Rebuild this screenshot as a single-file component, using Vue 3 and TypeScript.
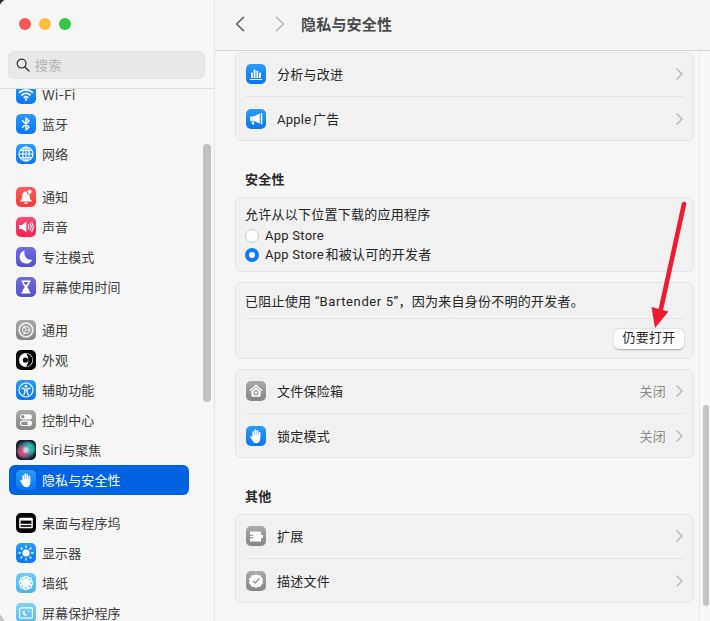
<script setup lang="ts">
interface NavItem { label: string; icon: string; tone: string; active?: boolean }
interface Row { label: string; icon: string; tone: string; value?: string }

const hand = `<path d="M7.2 10V6.2M9.3 9.4V4.2M11.4 9.4V4.8M13.5 10.4V6.6" stroke="#fff" stroke-width="1.7" stroke-linecap="round" fill="none"/><path d="M6.4 9.2H14.3V12.4C14.3 15.4 12.6 17.2 10.3 17.2C8.4 17.2 7.4 16.4 6.4 14.6L4.4 11.4C3.9 10.4 5 9.6 5.8 10.4L6.4 11Z" fill="#fff"/>`

const icons: Record<string, string> = {
  wifi: `<g fill="none" stroke="#fff" stroke-width="1.7" stroke-linecap="round"><path d="M3.6 8.4C7.2 5 12.8 5 16.4 8.4"/><path d="M6 11C8.3 8.9 11.7 8.9 14 11"/><path d="M8.2 13.3C9.3 12.4 10.7 12.4 11.8 13.3"/></g><circle cx="10" cy="15.4" r="1.2" fill="#fff"/>`,
  bluetooth: `<path d="M6.6 6.8L13 12.9L10 16V4L13 7.1L6.6 13.2" fill="none" stroke="#fff" stroke-width="1.4" stroke-linejoin="round" stroke-linecap="round"/>`,
  globe: `<g fill="none" stroke="#fff" stroke-width="1.1"><circle cx="10" cy="10" r="7"/><ellipse cx="10" cy="10" rx="3.2" ry="7"/><path d="M10 3V17M3 10H17M4 6.4H16M4 13.6H16"/></g>`,
  bell: `<path d="M10 4.6C7.4 4.6 6.2 6.6 6.2 9V11.4L4.4 13.6V14.6H15.6V13.6L13.8 11.4V9C13.8 6.6 12.6 4.6 10 4.6Z" fill="#fff"/><path d="M8.2 15.4H11.8C11.6 16.6 10.9 17 10 17S8.4 16.6 8.2 15.4Z" fill="#fff"/><circle cx="13.6" cy="4.8" r="2.6" fill="#fff" stroke="#fb4a4a" stroke-width="1"/>`,
  sound: `<path d="M3 8H6L10.4 4.8V15.2L6 12H3Z" fill="#fff"/><g fill="none" stroke="#fff" stroke-width="1.1" stroke-linecap="round"><path d="M12.2 8C13 9.2 13 10.8 12.2 12"/><path d="M14 6.6C15.3 8.6 15.3 11.4 14 13.4"/><path d="M15.8 5.4C17.5 8.2 17.5 11.8 15.8 14.6"/></g>`,
  moon: `<path d="M8.6 3.6C5.6 4.4 3.6 7 3.6 10.1C3.6 13.8 6.6 16.6 10.2 16.6C13 16.6 15.4 14.9 16.4 12.4C12 13.6 7.2 10 8.6 3.6Z" fill="#fff"/>`,
  hourglass: `<path d="M5.6 3.6H14.4V5H13.6C13.6 7.6 11.8 9 11 10C11.8 11 13.6 12.4 13.6 15H14.4V16.4H5.6V15H6.4C6.4 12.4 8.2 11 9 10C8.2 9 6.4 7.6 6.4 5H5.6ZM7.8 5C7.9 6 8.5 7 10 8.4C11.5 7 12.1 6 12.2 5Z" fill="#fff"/><path d="M7.6 15H12.4C12 13.4 11 12.6 10 11.8C9 12.6 8 13.4 7.6 15Z" fill="#fff"/>`,
  gear: `<g fill="none" stroke="#ececec"><circle cx="10" cy="10" r="6.8" stroke-width="1.8"/><circle cx="10" cy="10" r="3.4" stroke-width="1.1"/><path d="M7.6 5.4L10 10M15 10H10M7.6 14.6L10 10" stroke-width="1.1"/></g>`,
  appearance: `<circle cx="10" cy="10" r="7" fill="#fff"/><path d="M10 3.6A6.4 6.4 0 0 1 10 16.4C13 14 13 6 10 3.6Z" fill="#000"/><circle cx="9.4" cy="10" r="2.6" fill="#000"/>`,
  access: `<circle cx="10" cy="10" r="7" fill="none" stroke="#fff" stroke-width="1.2"/><circle cx="10" cy="6.3" r="1.3" fill="#fff"/><path d="M6 8.2L9 9V11.4L7.8 15M14 8.2L11 9V11.4L12.2 15" fill="none" stroke="#fff" stroke-width="1.3" stroke-linecap="round"/>`,
  toggles: `<rect x="4" y="4.2" width="12" height="5.2" rx="2.6" fill="#fff"/><circle cx="6.8" cy="6.8" r="1.7" fill="#8e8e8e"/><rect x="4.5" y="11.1" width="11" height="4.4" rx="2.2" fill="none" stroke="#fff" stroke-width="1.1"/><circle cx="13.2" cy="13.3" r="1.7" fill="#fff"/>`,
  siri: ``,
  hand,
  dock: `<rect x="3.2" y="4.8" width="13.6" height="10.4" rx="1.2" fill="#fff"/><rect x="4.6" y="7.6" width="10.8" height="3.2" fill="#000"/><rect x="4.6" y="12.2" width="10.8" height="1.6" fill="#000"/>`,
  sun: `<circle cx="10" cy="10" r="3.6" fill="#fff"/><g stroke="#fff" stroke-width="1.3" stroke-linecap="round"><path d="M10 3V4.4M10 15.6V17M3 10H4.4M15.6 10H17M5 5L6 6M14 14L15 15M5 15L6 14M14 6L15 5"/></g>`,
  flower: `<g fill="none" stroke="#fff" stroke-width="1.2"><circle cx="10" cy="5.8" r="2.4"/><circle cx="10" cy="14.2" r="2.4"/><circle cx="5.8" cy="10" r="2.4"/><circle cx="14.2" cy="10" r="2.4"/><circle cx="7" cy="7" r="2.4"/><circle cx="13" cy="7" r="2.4"/><circle cx="7" cy="13" r="2.4"/><circle cx="13" cy="13" r="2.4"/></g><circle cx="10" cy="10" r="1.8" fill="#fff"/>`,
  saver: `<rect x="3.6" y="4.8" width="12.8" height="10.4" rx="1.2" fill="none" stroke="#fff" stroke-width="1.2"/><path d="M8.4 7.2C6.8 8 6.4 9.8 7.2 11.2C8 12.6 10 13 11.4 12C9.6 12 8 10 8.4 7.2Z" fill="#fff"/><circle cx="12.6" cy="8" r=".8" fill="#fff"/>`,
  bars: `<g fill="#fff"><rect x="5" y="8.6" width="1.8" height="5.4"/><rect x="7.7" y="5.6" width="1.8" height="8.4"/><rect x="10.4" y="6.8" width="1.8" height="7.2"/><rect x="13.1" y="8.6" width="1.8" height="5.4"/><rect x="3.6" y="15" width="12.8" height="1"/></g>`,
  megaphone: `<path d="M4 7.6H7.4L13.8 4.6V14.6L7.4 11.8H4Z" fill="#fff"/><rect x="14.8" y="4" width="1.5" height="11.4" rx=".7" fill="#fff"/><path d="M5.4 12.4H7.6L8.4 15.6H6.4Z" fill="#fff"/>`,
  house: `<path d="M10 3.6L3.2 9.4L4 10.2L10 5.2L16 10.2L16.8 9.4Z" fill="#fff"/><path d="M5.4 10V15.8H14.6V10L10 6.2Z" fill="#fff"/><circle cx="10" cy="11.6" r="2" fill="none" stroke="#8f8f8f" stroke-width="1.1"/>`,
  puzzle: `<path d="M4 5.4H15V9H17V12H15V15.6H4V12.2H7.4V8.8H4Z" fill="#fff"/><path d="M4 10.5H8.4" stroke="#fff" stroke-width="1"/><circle cx="8.2" cy="10.5" r="1.1" fill="#fff"/>`,
  badge: `<path d="M10 3L12 4.3L14.4 4.2L15.5 6.4L17.2 8L16.4 10L17.2 12L15.5 13.6L14.4 15.8L12 15.7L10 17L8 15.7L5.6 15.8L4.5 13.6L2.8 12L3.6 10L2.8 8L4.5 6.4L5.6 4.2L8 4.3Z" fill="#fff"/><path d="M7.2 10.2L9.2 12.2L13 7.8" fill="none" stroke="#8a8a8a" stroke-width="1.2" stroke-linecap="round" stroke-linejoin="round"/>`
}

const navGroups: NavItem[][] = [
  [
    { label: 'Wi-Fi', icon: 'wifi', tone: 'blue' },
    { label: '蓝牙', icon: 'bluetooth', tone: 'blue' },
    { label: '网络', icon: 'globe', tone: 'blue' }
  ],
  [
    { label: '通知', icon: 'bell', tone: 'red' },
    { label: '声音', icon: 'sound', tone: 'pink' },
    { label: '专注模式', icon: 'moon', tone: 'indigo' },
    { label: '屏幕使用时间', icon: 'hourglass', tone: 'indigo' }
  ],
  [
    { label: '通用', icon: 'gear', tone: 'gray' },
    { label: '外观', icon: 'appearance', tone: 'black' },
    { label: '辅助功能', icon: 'access', tone: 'blue' },
    { label: '控制中心', icon: 'toggles', tone: 'gray' },
    { label: 'Siri与聚焦', icon: 'siri', tone: 'siri' },
    { label: '隐私与安全性', icon: 'hand', tone: 'blue', active: true }
  ],
  [
    { label: '桌面与程序坞', icon: 'dock', tone: 'black' },
    { label: '显示器', icon: 'sun', tone: 'blue' },
    { label: '墙纸', icon: 'flower', tone: 'sky' },
    { label: '屏幕保护程序', icon: 'saver', tone: 'cyan' }
  ]
]

const privacyRows: Row[] = [
  { label: '分析与改进', icon: 'bars', tone: 'blue' },
  { label: 'Apple广告', icon: 'megaphone', tone: 'blue' }
]
const vaultRows: Row[] = [
  { label: '文件保险箱', icon: 'house', tone: 'gray', value: '关闭' },
  { label: '锁定模式', icon: 'hand', tone: 'blue', value: '关闭' }
]
const otherRows: Row[] = [
  { label: '扩展', icon: 'puzzle', tone: 'gray' },
  { label: '描述文件', icon: 'badge', tone: 'gray' }
]
const rowCards: { heading?: string; rows: Row[] }[] = [{ rows: vaultRows }, { heading: '其他', rows: otherRows }]
</script>

<template>
  <div class="window">
    <aside class="sidebar">
      <div class="lights">
        <span class="light red-light"></span>
        <span class="light yellow-light"></span>
        <span class="light green-light"></span>
      </div>
      <div class="search">
        <svg class="search-icon" viewBox="0 0 14 14" width="14" height="14">
          <circle cx="5.6" cy="5.6" r="4.4" fill="none" stroke="#333" stroke-width="1.2" />
          <path d="M8.9 8.9L13 13" stroke="#333" stroke-width="1.4" stroke-linecap="round" />
        </svg>
        <span class="lift">搜索</span>
      </div>
      <nav class="nav">
        <div class="nav-inner">
          <div v-for="(group, g) in navGroups" :key="g" class="nav-group">
            <div v-for="item in group" :key="item.label" class="nav-item" :class="{ active: item.active }">
              <span class="icon" :class="item.tone">
                <svg viewBox="0 0 20 20" width="20" height="20" v-html="icons[item.icon]"></svg>
              </span>
              <span class="lift">{{ item.label }}</span>
            </div>
          </div>
        </div>
        <div class="side-thumb"></div>
      </nav>
    </aside>

    <main class="main">
      <header class="toolbar">
        <svg class="nav-arrow" viewBox="0 0 10 16" width="10" height="16">
          <path d="M8.6 1.2L1.6 8L8.6 14.8" fill="none" stroke="#5a5a5a" stroke-width="1.5" stroke-linecap="round" stroke-linejoin="round" />
        </svg>
        <svg class="nav-arrow forward" viewBox="0 0 10 16" width="10" height="16">
          <path d="M1.4 1.2L8.4 8L1.4 14.8" fill="none" stroke="#b4b4b4" stroke-width="1.5" stroke-linecap="round" stroke-linejoin="round" />
        </svg>
        <h1 class="lift">隐私与安全性</h1>
      </header>

      <div class="body">
        <div class="content">
          <section class="card">
            <div v-for="row in privacyRows" :key="row.label" class="row">
              <span class="icon" :class="row.tone">
                <svg viewBox="0 0 20 20" width="20" height="20" v-html="icons[row.icon]"></svg>
              </span>
              <span class="row-label lift">{{ row.label }}</span>
              <svg class="chev" viewBox="0 0 7 12" width="7" height="12"><path d="M1 1L6 6L1 11" fill="none" stroke="#b5b5b5" stroke-width="1.4" stroke-linecap="round" stroke-linejoin="round" /></svg>
            </div>
          </section>

          <h2>安全性</h2>
          <section class="card source">
            <div class="source-title">允许从以下位置下载的应用程序</div>
            <label class="radio-row"><span class="radio"></span>App Store</label>
            <label class="radio-row"><span class="radio on"></span>App Store和被认可的开发者</label>
          </section>

          <section class="card blocked">
            <div class="blocked-text"><span>已阻止使用 “<span class="app-name">Bartender 5</span>”，因为来自身份不明的开发者。</span></div>
            <div class="blocked-action"><button class="open-btn">仍要打开</button></div>
          </section>

          <template v-for="(block, b) in rowCards" :key="b">
            <h2 v-if="block.heading">{{ block.heading }}</h2>
            <section class="card" :class="{ spaced: !block.heading }">
              <div v-for="row in block.rows" :key="row.label" class="row">
                <span class="icon" :class="row.tone">
                  <svg viewBox="0 0 20 20" width="20" height="20" v-html="icons[row.icon]"></svg>
                </span>
                <span class="row-label lift">{{ row.label }}</span>
                <span v-if="row.value" class="row-value lift">{{ row.value }}</span>
                <svg class="chev" viewBox="0 0 7 12" width="7" height="12"><path d="M1 1L6 6L1 11" fill="none" stroke="#b5b5b5" stroke-width="1.4" stroke-linecap="round" stroke-linejoin="round" /></svg>
              </div>
            </section>
          </template>
        </div>
        <div class="track"><div class="thumb"></div></div>
      </div>
    </main>

    <svg class="annotation" viewBox="0 0 710 621" width="710" height="621">
      <path d="M684 204L660.5 311" stroke="#ee1c2e" stroke-width="4.6" stroke-linecap="round" fill="none" />
      <path d="M651.5 307L668.5 311.5L655 328Z" fill="#ee1c2e" />
    </svg>
    <svg class="corner" viewBox="0 0 710 621" width="710" height="621">
      <path d="M0 0H4.5L3 1L1 3L0 4.5Z" fill="#2a2a2a" />
      <path d="M0 614L5 621H0Z" fill="#c4c4c4" />
    </svg>
  </div>
</template>

<style>
html, body { margin: 0; background: #f6f6f6; }
</style>

<style scoped>
.window {
  position: relative;
  display: flex;
  width: 710px;
  height: 621px;
  overflow: hidden;
  background: #f6f6f6;
  color: #262626;
  font-family: Roboto, "Noto Sans CJK SC", sans-serif;
  font-size: 13px;
  letter-spacing: 0.25px;
  text-autospace: normal;
}
.lift { padding-bottom: 2px; }
.sidebar {
  display: flex;
  flex-direction: column;
  flex: none;
  width: 214px;
  height: 621px;
  border-right: 1px solid #e4e4e4;
  background: #f6f6f6;
}
.lights { display: flex; gap: 8px; padding: 18px 0 0 19px; height: 33px; box-sizing: border-box; }
.light { width: 12px; height: 12px; border-radius: 50%; }
.red-light { background: #fc5753; }
.yellow-light { background: #fdbc40; }
.green-light { background: #33c748; }
.search {
  display: flex;
  align-items: center;
  gap: 5px;
  box-sizing: border-box;
  height: 28px;
  margin: 18px 9px 0 8px;
  padding-left: 7px;
  border: 1px solid #e2e2e2;
  border-radius: 6px;
  background: #e8e8e8;
  color: #b2b2b2;
}
.search-icon { flex: none; }
.nav {
  position: relative;
  flex: 1;
  margin-top: 9px;
  border-top: 1px solid #dedede;
  overflow: hidden;
}
.nav-inner { margin-top: -10px; }
.nav-group { margin-bottom: 13px; }
.nav-item {
  display: flex;
  align-items: center;
  gap: 6px;
  box-sizing: border-box;
  width: 180px;
  height: 30px;
  margin-left: 9px;
  padding-left: 7px;
  border-radius: 6px;
  color: #3c3c3c;
  font-family: Inter, "Noto Sans CJK SC", sans-serif;
  letter-spacing: 0.1px;
  text-autospace: no-autospace;
}
.nav-group:first-child .nav-item:first-child .lift { padding-bottom: 0; padding-top: 1px; }
.nav-item.active { background: #0063e1; color: #fff; }
.side-thumb {
  position: absolute;
  left: 203px;
  top: 55px;
  width: 8px;
  height: 258px;
  border-radius: 4px;
  background: #c1c1c1;
}
.icon {
  display: block;
  flex: none;
  width: 20px;
  height: 20px;
  border-radius: 5px;
}
.icon svg { display: block; }
.blue { background: linear-gradient(#2a9bfd, #0a76f5); }
.red { background: linear-gradient(#fb5e58, #f53a3a); }
.pink { background: linear-gradient(#fd4a78, #f8234f); }
.indigo { background: linear-gradient(#6f6de0, #5551cc); }
.gray { background: linear-gradient(#a9a9ab, #858587); }
.black { background: #050505; }
.sky { background: linear-gradient(#6fcdf6, #4cb3ee); }
.cyan { background: linear-gradient(#7fd4f5, #55b9ee); }
.siri {
  background:
    radial-gradient(circle at 50% 50%, #b8d8e8 0 12%, transparent 30%),
    radial-gradient(circle at 36% 58%, #e0447e 0 18%, transparent 42%),
    radial-gradient(circle at 66% 42%, #27b6b0 0 18%, transparent 44%),
    radial-gradient(circle at 50% 50%, #3a6f8f 0 44%, #15181c 72%);
}
.main { display: flex; flex-direction: column; flex: 1; min-width: 0; }
.toolbar {
  display: flex;
  align-items: center;
  box-sizing: border-box;
  flex: none;
  height: 51px;
  padding: 0 0 2px 20px;
  border-bottom: 1px solid #d6d6d6;
  background: #f4f4f4;
}
.nav-arrow { flex: none; }
.nav-arrow.forward { margin-left: 30px; }
.toolbar h1 { margin: 0 0 0 16px; font-size: 15px; font-weight: 600; color: #4a4a4a; letter-spacing: 0.2px; }
.body { display: flex; flex: 1; min-height: 0; }
.content { flex: 1; min-width: 0; padding: 1px 5px 0 20px; }
.track {
  flex: none;
  box-sizing: border-box;
  width: 11px;
  border-left: 1px solid #e8e8e8;
  background: #f8f8f8;
}
.thumb {
  width: 6px;
  height: 201px;
  margin: 354px 0 0 3px;
  border-radius: 3px;
  background: #c2c2c2;
}
.card {
  box-sizing: border-box;
  padding: 0 9px;
  border: 1px solid #e4e4e4;
  border-radius: 6px;
  background: #f1f1f1;
}
.card.spaced { margin-top: 10px; }
h2 {
  height: 18px;
  margin: 29px 0 9px 10px;
  font-size: 13px;
  line-height: 20px;
  font-weight: 600;
  color: #2a2a2a;
}
.row {
  display: flex;
  align-items: center;
  box-sizing: border-box;
  height: 43px;
  padding: 0 1px 1px;
}
.row + .row { height: 44px; padding: 1px 1px 0; border-top: 1px solid #e3e3e3; }
.row .icon { margin-right: 11px; }
.row-label { flex: 1; }
.row-value { margin-right: 10px; color: #8a8a8a; }
.chev { flex: none; }
.source { height: 75px; padding-top: 7px; }
.source-title { height: 20px; line-height: 20px; margin-bottom: 1px; }
.radio-row { display: flex; align-items: center; gap: 6px; height: 19px; line-height: 19px; }
.radio {
  box-sizing: border-box;
  flex: none;
  width: 14px;
  height: 14px;
  border: 1px solid #c8c8c8;
  border-radius: 50%;
  background: #fff;
}
.radio.on { border: 4px solid #0a7cf7; }
.blocked { height: 77px; margin-top: 10px; }
.blocked-text {
  display: flex;
  align-items: center;
  box-sizing: border-box;
  height: 36px;
  border-bottom: 1px solid #e3e3e3;
}
.app-name { letter-spacing: 0.6px; }
.blocked-action { display: flex; justify-content: flex-end; padding-top: 10px; }
.open-btn {
  box-sizing: border-box;
  width: 70px;
  height: 20px;
  padding: 0 0 2px;
  border: 0;
  border-radius: 5px;
  background: #fff;
  box-shadow: 0 0.5px 1.5px rgba(0, 0, 0, 0.3);
  color: #262626;
  font: inherit;
  letter-spacing: 0.2px;
  line-height: 18px;
}
.annotation, .corner { position: absolute; left: 0; top: 0; pointer-events: none; }
</style>
